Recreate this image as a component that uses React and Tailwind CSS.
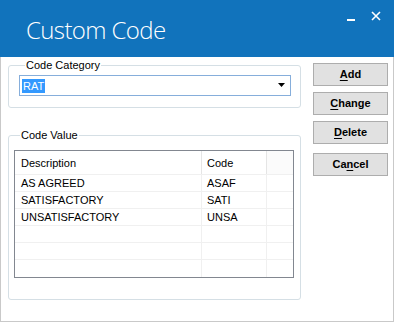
export default function App() {
  const rows = [
    { desc: 'AS AGREED', code: 'ASAF' },
    { desc: 'SATISFACTORY', code: 'SATI' },
    { desc: 'UNSATISFACTORY', code: 'UNSA' },
    { desc: '', code: '' },
    { desc: '', code: '' },
    { desc: '', code: '' },
  ];

  const buttons = [
    { key: 'A', rest: 'dd' },
    { key: 'C', rest: 'hange' },
    { key: 'D', rest: 'elete' },
  ];

  return (
    <div className="w-[394px] h-[322px] bg-white flex flex-col font-['Liberation_Sans',Arial,sans-serif] text-[11px] text-black">
      {/* title bar */}
      <div className="h-[57px] shrink-0 bg-[#1173bc] flex items-start justify-between">
        <div className="pl-[26px] pt-[14px] text-[24px] leading-[32px] font-light tracking-[-0.6px] text-white font-['Open_Sans',sans-serif]">
          Custom Code
        </div>
        <div className="flex items-start gap-[15px] pr-[13px] pt-[11px]">
          <svg width="9" height="10" viewBox="0 0 9 10" className="mt-[1px]">
            <rect x="0" y="7" width="8" height="2" fill="white" />
          </svg>
          <svg width="10" height="10" viewBox="0 0 10 10">
            <path d="M1 1 L9 9 M9 1 L1 9" stroke="white" strokeWidth="1.6" />
          </svg>
        </div>
      </div>

      {/* body */}
      <div className="flex-1 flex border-l border-r border-b border-[#c9c9c9] pl-[7px] pr-[4px]">
        <div className="w-[293px] flex flex-col">
          <fieldset className="mt-[2px] border border-[#d5dfe5] rounded-[3px] pl-[10px] pr-[9px] pb-[11px]">
            <legend className="ml-[6px] px-[1px] leading-[13px]">Code Category</legend>
            <div className="mt-[3px] h-[21px] w-[272px] border border-[#86aedb] flex items-center justify-between pl-[2px] pr-[4px]">
              <span className="bg-[#3399ff] text-white leading-[14px] px-[1px]">RAT</span>
              <svg width="8" height="5" viewBox="0 0 8 5">
                <path d="M0 0 H7 L3.5 4 Z" fill="black" />
              </svg>
            </div>
          </fieldset>

          <fieldset className="mt-[21px] border border-[#d5dfe5] rounded-[3px] pl-[5px] pr-[5px] pb-[21px]">
            <legend className="ml-[6px] px-[1px] leading-[13px]">Code Value</legend>
            <div className="mt-[8px] w-[280px] border border-[#828790] bg-white">
              <div className="h-[24px] flex border-b border-[#f0f0f0]">
                <div className="w-[187px] h-full pt-[6px] leading-[13px] pl-[6px] border-r border-[#e5e5e5]">Description</div>
                <div className="w-[65px] h-full pt-[6px] leading-[13px] pl-[5px] border-r border-[#e5e5e5]">Code</div>
                <div className="flex-1 h-full bg-[#fbfbfb]"></div>
              </div>
              {rows.map((r, i) => (
                <div key={i} className={`h-[17px] flex ${i < rows.length - 1 ? 'border-b border-[#f0f0f0]' : ''}`}>
                  <div className="w-[187px] flex items-center pl-[6px] border-r border-[#f0f0f0]">{r.desc}</div>
                  <div className="w-[65px] flex items-center pl-[5px] border-r border-[#f0f0f0]">{r.code}</div>
                  <div className="flex-1"></div>
                </div>
              ))}
            </div>
          </fieldset>
        </div>

        <div className="ml-[12px] w-[75px] flex flex-col pt-[6px]">
          {buttons.map((b) => (
            <button
              key={b.key}
              className="h-[23px] mb-[6px] bg-[#e1e1e1] border border-[#adadad] font-bold text-[11px] leading-none"
            >
              <span className="underline underline-offset-2">{b.key}</span>
              {b.rest}
            </button>
          ))}
          <button className="h-[23px] mt-[3px] bg-[#e1e1e1] border border-[#adadad] font-bold text-[11px] leading-none">
            Ca<span className="underline underline-offset-2">n</span>cel
          </button>
        </div>
      </div>
    </div>
  );
}
